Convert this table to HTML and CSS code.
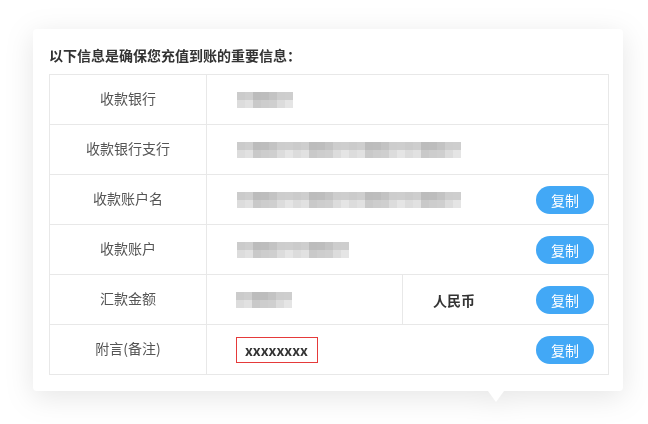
FILE: index.html
```html
<!DOCTYPE html>
<html lang="zh-CN">
<head>
  <meta charset="UTF-8" />
  <title>充值信息</title>
  <link rel="stylesheet" href="styles.css">
</head>
<body>
  <div class="panel">
    <h2 class="panel-title">以下信息是确保您充值到账的重要信息：</h2>
    <table class="info-table">
      <colgroup>
        <col class="col-label">
        <col class="col-value">
        <col class="col-extra">
      </colgroup>
      <tr>
        <td class="label">收款银行</td>
        <td colspan="2"><span class="blur w7"></span></td>
      </tr>
      <tr>
        <td class="label">收款银行支行</td>
        <td colspan="2"><span class="blur w28"></span></td>
      </tr>
      <tr>
        <td class="label">收款账户名</td>
        <td colspan="2">
          <div class="cell-row">
            <span class="blur w28"></span>
            <button class="copy-btn">复制</button>
          </div>
        </td>
      </tr>
      <tr>
        <td class="label">收款账户</td>
        <td colspan="2">
          <div class="cell-row">
            <span class="blur w14"></span>
            <button class="copy-btn">复制</button>
          </div>
        </td>
      </tr>
      <tr>
        <td class="label">汇款金额</td>
        <td class="amount"><span class="blur w7"></span></td>
        <td>
          <div class="cell-row">
            <strong class="currency">人民币</strong>
            <button class="copy-btn">复制</button>
          </div>
        </td>
      </tr>
      <tr>
        <td class="label">附言(备注)</td>
        <td colspan="2">
          <div class="cell-row">
            <span class="memo">xxxxxxxx</span>
            <button class="copy-btn">复制</button>
          </div>
        </td>
      </tr>
    </table>
  </div>
</body>
</html>
```

FILE: styles.css
```css
html {
  background: #fff;
}
body {
  margin: 0;
  min-height: 424px;
  padding: 29px 0 0 33px;
  box-sizing: border-box;
  font-family: "Noto Sans CJK SC", "Noto Sans", sans-serif;
  color: #333;
}
.panel {
  position: relative;
  width: 560px;
  padding: 16px 14px 16px 16px;
  background: #fff;
  border-radius: 4px;
  filter: drop-shadow(0 6px 14px rgba(0, 0, 0, 0.1));
}
.panel::after {
  content: "";
  position: absolute;
  left: 455px;
  bottom: -11px;
  border-top: 11px solid #fff;
  border-left: 8px solid transparent;
  border-right: 8px solid transparent;
}
.panel-title {
  margin: 0 0 9px;
  font-size: 14px;
  line-height: 20px;
  font-weight: bold;
  color: #333;
}
.info-table {
  width: 560px;
  border-collapse: collapse;
  table-layout: fixed;
}
.col-label {
  width: 157px;
}
.col-value {
  width: 196px;
}
.info-table td {
  height: 49px;
  padding: 0 14px 0 30px;
  border: 1px solid #e8e8e8;
  font-size: 14px;
  line-height: 20px;
  vertical-align: middle;
}
.info-table td.label {
  height: 46px;
  padding: 0 0 3px;
  text-align: center;
  color: #555;
}
.info-table td.amount {
  padding-left: 29px;
}
.cell-row {
  display: flex;
  align-items: center;
  justify-content: space-between;
}
.blur {
  display: block;
  height: 16px;
  background:
    linear-gradient(to right, #cbcbcb 0 8px, #cecece 8px 16px, #bcbcbc 16px 24px, #bdbdbd 24px 32px, #c3c3c3 32px 40px, #cdcdcd 40px 48px, #cecece 48px 56px) top left / 56px 8px repeat-x,
    linear-gradient(to right, #dcdcdc 0 8px, #e1e1e1 8px 16px, #c9c9c9 16px 24px, #cdcdcd 24px 32px, #cfcfcf 32px 40px, #dcdcdc 40px 48px, #e5e5e5 48px 56px) bottom left / 56px 8px repeat-x;
}
.w7 {
  width: 56px;
}
.w14 {
  width: 112px;
}
.w28 {
  width: 224px;
}
.copy-btn {
  width: 58px;
  height: 28px;
  padding: 0;
  border: none;
  border-radius: 14px;
  background: #42a8f6;
  color: #fff;
  font-family: inherit;
  font-size: 14px;
  cursor: pointer;
}
.currency {
  font-size: 14px;
  font-weight: bold;
  color: #333;
}
.memo {
  margin-left: -1px;
  padding: 0 9px 0 8px;
  height: 24px;
  line-height: 24px;
  border: 1px solid #e53a3a;
  font-size: 14px;
  font-weight: bold;
  color: #333;
}
```
